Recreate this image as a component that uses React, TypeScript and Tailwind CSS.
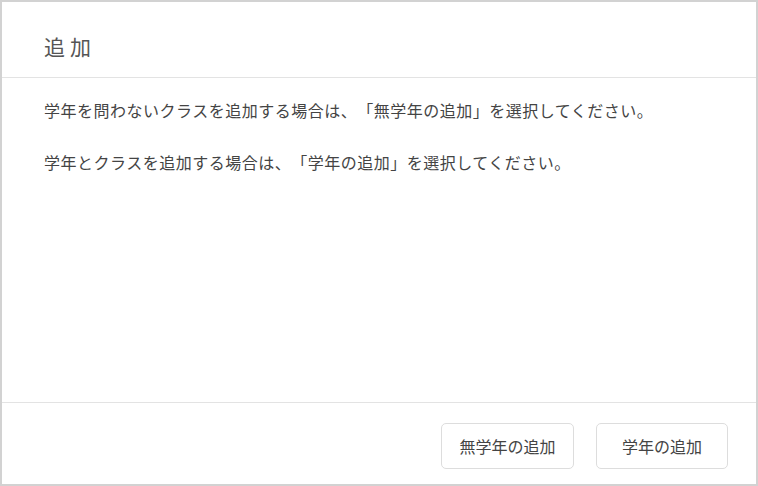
export default function App() {
  const font = { fontFamily: '"Noto Sans CJK JP", "Noto Sans", sans-serif' };
  return (
    <div className="w-[758px] h-[486px] bg-white border-2 border-[#d2d2d2] flex flex-col [text-spacing-trim:space-all]" style={font}>
      <div className="h-[76px] shrink-0 border-b border-[#e3e3e3] pl-[42px] pt-[29px]">
        <h1 className="text-[21px] leading-[30px] tracking-[5px] text-[#555555] font-normal">追加</h1>
      </div>
      <div className="flex-1 pl-[42px] pt-[20px] text-[16px] leading-[24px] tracking-[0.5px] text-[#444444]">
        <p>学年を問わないクラスを追加する場合は、「無学年の追加」を選択してください。</p>
        <p className="mt-[28px]">学年とクラスを追加する場合は、「学年の追加」を選択してください。</p>
      </div>
      <div className="h-[82px] shrink-0 border-t border-[#e3e3e3] flex justify-end items-start pt-[20px] pr-[28px] gap-[22px]">
        <button className="w-[133px] h-[46px] rounded-[5px] border border-[#dddddd] bg-white text-[16px] text-[#444444]">無学年の追加</button>
        <button className="w-[132px] h-[46px] rounded-[5px] border border-[#dddddd] bg-white text-[16px] text-[#444444]">学年の追加</button>
      </div>
    </div>
  );
}
